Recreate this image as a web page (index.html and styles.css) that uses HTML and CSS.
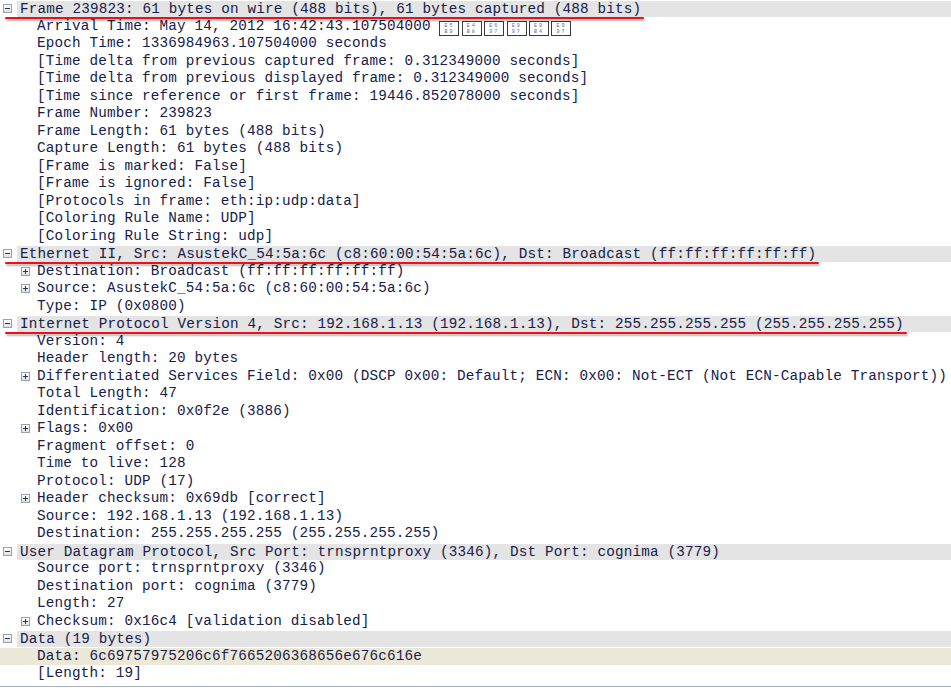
FILE: index.html
```html
<!DOCTYPE html>
<html lang="en">
<head>
    <meta charset="UTF-8">
    <title>Packet details</title>
    <link rel="stylesheet" href="styles.css">
</head>
<body>

    <div class="tree">
        <div class="row head"><span class="toggle open"></span><span class="label"><span class="marked">Frame 239823: 61 bytes on wire (488 bits), 61 bytes captured (488 bits)</span></span></div>
        <div class="row"><span class="slot"></span><span class="label">Arrival Time: May 14, 2012 16:42:43.107504000 <span class="tofu">E5<br>B9</span><span class="tofu">E4<br>B8</span><span class="tofu">E6<br>97</span><span class="tofu">E9<br>97</span><span class="tofu">E9<br>B4</span><span class="tofu">E9<br>97</span></span></div>
        <div class="row"><span class="slot"></span><span class="label">Epoch Time: 1336984963.107504000 seconds</span></div>
        <div class="row"><span class="slot"></span><span class="label">[Time delta from previous captured frame: 0.312349000 seconds]</span></div>
        <div class="row"><span class="slot"></span><span class="label">[Time delta from previous displayed frame: 0.312349000 seconds]</span></div>
        <div class="row"><span class="slot"></span><span class="label">[Time since reference or first frame: 19446.852078000 seconds]</span></div>
        <div class="row"><span class="slot"></span><span class="label">Frame Number: 239823</span></div>
        <div class="row"><span class="slot"></span><span class="label">Frame Length: 61 bytes (488 bits)</span></div>
        <div class="row"><span class="slot"></span><span class="label">Capture Length: 61 bytes (488 bits)</span></div>
        <div class="row"><span class="slot"></span><span class="label">[Frame is marked: False]</span></div>
        <div class="row"><span class="slot"></span><span class="label">[Frame is ignored: False]</span></div>
        <div class="row"><span class="slot"></span><span class="label">[Protocols in frame: eth:ip:udp:data]</span></div>
        <div class="row"><span class="slot"></span><span class="label">[Coloring Rule Name: UDP]</span></div>
        <div class="row"><span class="slot"></span><span class="label">[Coloring Rule String: udp]</span></div>

        <div class="row head"><span class="toggle open"></span><span class="label"><span class="marked">Ethernet II, Src: AsustekC_54:5a:6c (c8:60:00:54:5a:6c), Dst: Broadcast (ff:ff:ff:ff:ff:ff)</span></span></div>
        <div class="row"><span class="toggle"></span><span class="label">Destination: Broadcast (ff:ff:ff:ff:ff:ff)</span></div>
        <div class="row"><span class="toggle"></span><span class="label">Source: AsustekC_54:5a:6c (c8:60:00:54:5a:6c)</span></div>
        <div class="row"><span class="slot"></span><span class="label">Type: IP (0x0800)</span></div>

        <div class="row head"><span class="toggle open"></span><span class="label"><span class="marked">Internet Protocol Version 4, Src: 192.168.1.13 (192.168.1.13), Dst: 255.255.255.255 (255.255.255.255)</span></span></div>
        <div class="row"><span class="slot"></span><span class="label">Version: 4</span></div>
        <div class="row"><span class="slot"></span><span class="label">Header length: 20 bytes</span></div>
        <div class="row"><span class="toggle"></span><span class="label">Differentiated Services Field: 0x00 (DSCP 0x00: Default; ECN: 0x00: Not-ECT (Not ECN-Capable Transport))</span></div>
        <div class="row"><span class="slot"></span><span class="label">Total Length: 47</span></div>
        <div class="row"><span class="slot"></span><span class="label">Identification: 0x0f2e (3886)</span></div>
        <div class="row"><span class="toggle"></span><span class="label">Flags: 0x00</span></div>
        <div class="row"><span class="slot"></span><span class="label">Fragment offset: 0</span></div>
        <div class="row"><span class="slot"></span><span class="label">Time to live: 128</span></div>
        <div class="row"><span class="slot"></span><span class="label">Protocol: UDP (17)</span></div>
        <div class="row"><span class="toggle"></span><span class="label">Header checksum: 0x69db [correct]</span></div>
        <div class="row"><span class="slot"></span><span class="label">Source: 192.168.1.13 (192.168.1.13)</span></div>
        <div class="row"><span class="slot"></span><span class="label">Destination: 255.255.255.255 (255.255.255.255)</span></div>

        <div class="row head"><span class="toggle open"></span><span class="label">User Datagram Protocol, Src Port: trnsprntproxy (3346), Dst Port: cognima (3779)</span></div>
        <div class="row"><span class="slot"></span><span class="label">Source port: trnsprntproxy (3346)</span></div>
        <div class="row"><span class="slot"></span><span class="label">Destination port: cognima (3779)</span></div>
        <div class="row"><span class="slot"></span><span class="label">Length: 27</span></div>
        <div class="row"><span class="toggle"></span><span class="label">Checksum: 0x16c4 [validation disabled]</span></div>

        <div class="row head"><span class="toggle open"></span><span class="label">Data (19 bytes)</span></div>
        <div class="row selected"><span class="slot"></span><span class="label">Data: 6c69757975206c6f7665206368656e676c616e</span></div>
        <div class="row"><span class="slot"></span><span class="label">[Length: 19]</span></div>
    </div>

</body>
</html>
```

FILE: styles.css
```css
* {
    box-sizing: border-box;
}

body {
    margin: 0;
    background: #fff;
    font-family: "Liberation Mono", "DejaVu Sans Mono", monospace;
    font-size: 14.3px;
    color: #16204a;
}

.tree {
    height: 687px;
    border-bottom: 1px solid #a9b0bc;
    overflow: hidden;
}

/* one line of the tree */
.row {
    display: flex;
    align-items: center;
    height: 17.5px;
    line-height: 17.5px;
    white-space: pre;
    letter-spacing: 0.17px;
    padding-left: 21px;
}

.row .label {
    flex: 1;
    padding-left: 3px;
    height: 100%;
}

.slot,
.toggle {
    width: 9px;
    height: 9px;
    margin-right: 4px;
    flex: none;
}

/* protocol header lines */
.head {
    padding-left: 3px;
}

.head .toggle {
    margin-right: 5px;
}

.head .label {
    background: #e4e4e4;
    height: 16px;
    line-height: 16px;
    margin-top: 1px;
}

.selected {
    background: #ece8d8;
}

/* the little +/- boxes */
.toggle {
    position: relative;
    border: 1px solid #98a2ae;
    background: linear-gradient(#ffffff, #dde2e8);
}

.toggle:before,
.toggle:after {
    content: "";
    position: absolute;
    background: #2b3545;
}

.toggle:before {
    left: 1px;
    top: 3px;
    width: 5px;
    height: 1px;
}

.toggle:after {
    left: 3px;
    top: 1px;
    width: 1px;
    height: 5px;
}

.toggle.open:after {
    display: none;
}

/* hand drawn red line under some headers */
.marked {
    position: relative;
}

.marked:after {
    content: "";
    position: absolute;
    left: -15px;
    right: -3px;
    bottom: -2px;
    height: 2px;
    background: #e8121c;
    border-radius: 1px;
    box-shadow: 1px 2px 2px rgba(0, 0, 0, 0.3);
}

/* missing glyph boxes */
.tofu {
    display: inline-block;
    width: 20px;
    height: 15px;
    margin-right: 2.4px;
    border: 1px solid #3a3a3a;
    font-size: 5px;
    line-height: 6px;
    padding-top: 1px;
    text-align: center;
    letter-spacing: 2px;
    color: #3f6fb0;
    vertical-align: -3px;
    white-space: normal;
}
```
